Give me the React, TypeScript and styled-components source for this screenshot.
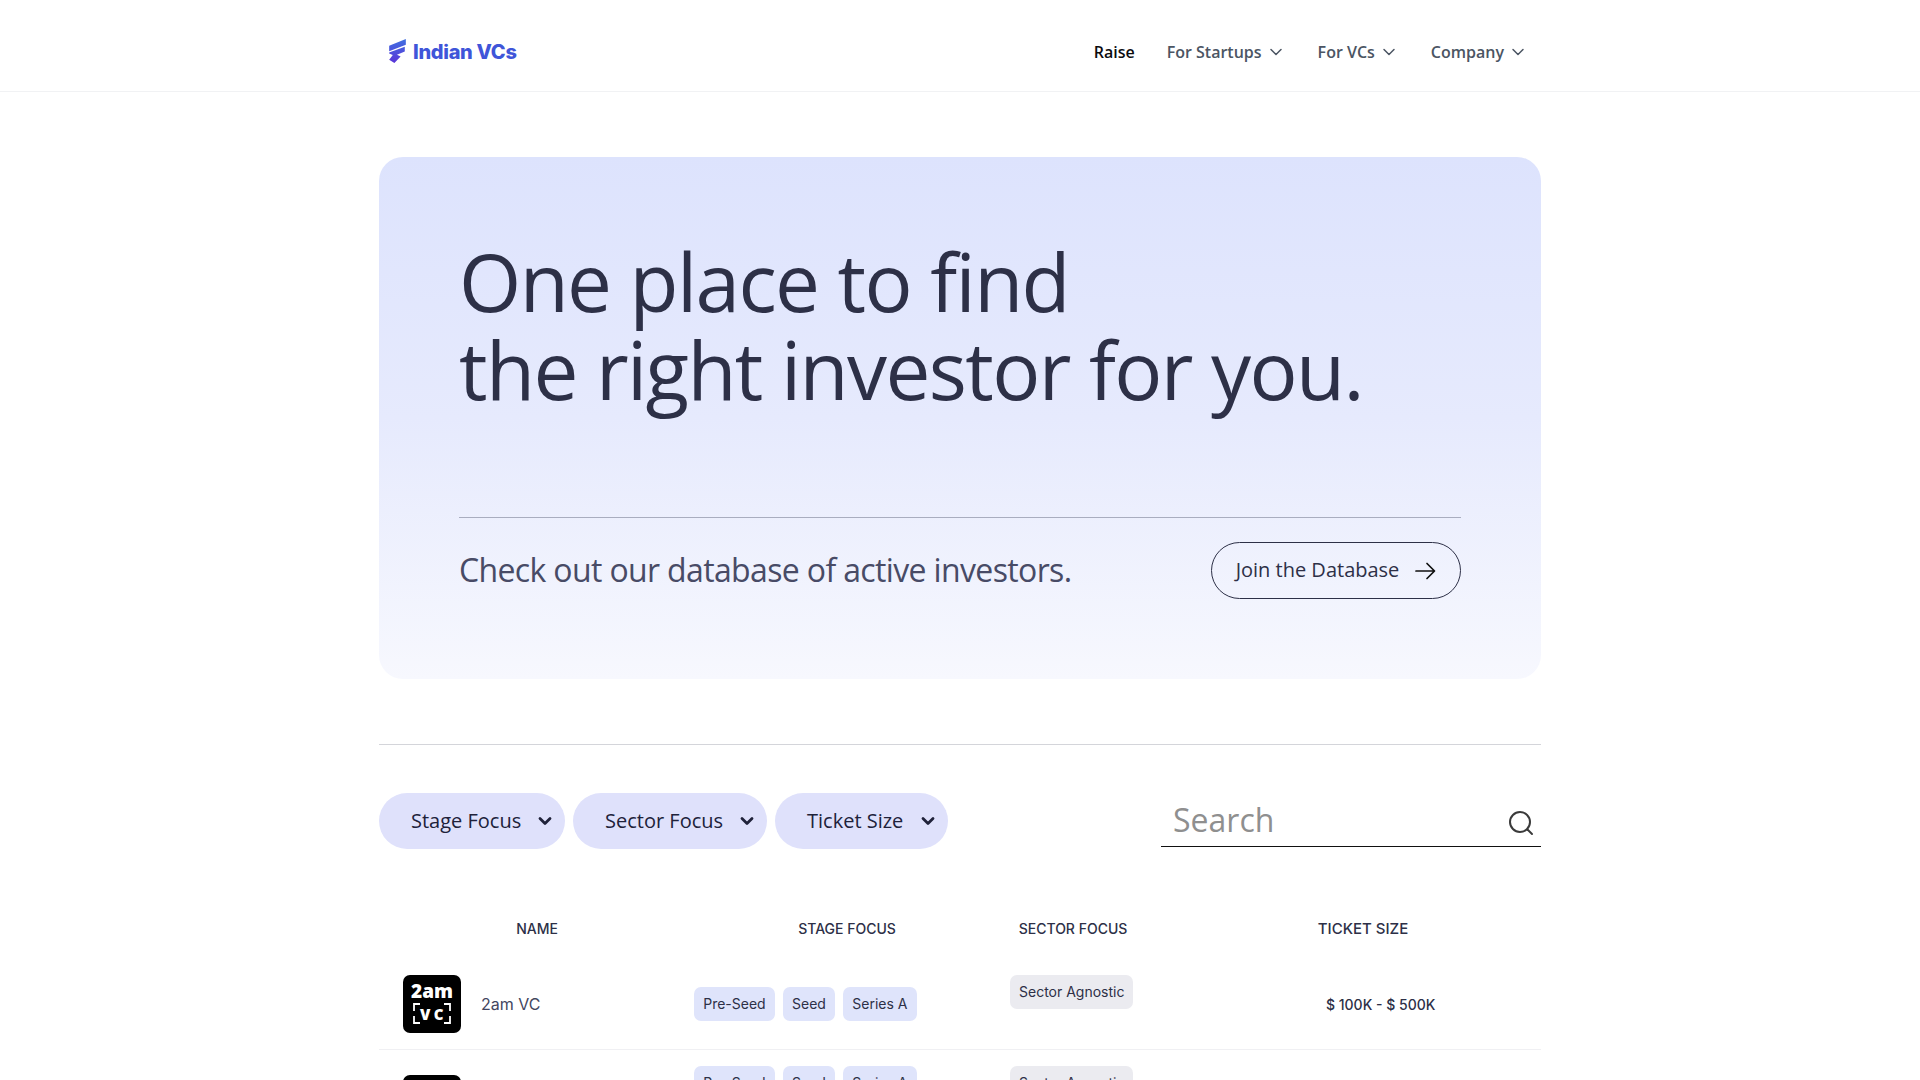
import React from "react";
import styled, { createGlobalStyle } from "styled-components";

const Global = createGlobalStyle`
  html, body { margin: 0; padding: 0; background: #fff; overflow: hidden; }
  body { font-family: "Open Sans", "Liberation Sans", sans-serif; color: #2d3047; }
  * { box-sizing: border-box; }
`;

const Page = styled.div`
  height: 100vh;
  overflow: hidden;
`;

const Header = styled.header`
  height: 92px;
  border-bottom: 1px solid #f1f2f4;
`;

const HeaderInner = styled.div`
  width: 1162px;
  height: 100%;
  margin: 0 auto;
  padding: 12px 15px 0 9px;
  display: flex;
  align-items: center;
  justify-content: space-between;
`;

const Brand = styled.a`
  display: flex;
  align-items: center;
  gap: 6px;
  font-family: Inter, sans-serif;
  font-weight: 800;
  font-size: 20px;
  letter-spacing: -0.3px;
  color: #3f55d9;
`;

const Nav = styled.nav`
  display: flex;
  align-items: center;
`;

const NavItem = styled.a<{ $active?: boolean; $gap: number }>`
  display: flex;
  align-items: center;
  gap: 6px;
  margin-left: ${(p) => p.$gap}px;
  font-size: 16px;
  font-weight: 600;
  color: ${(p) => (p.$active ? "#0b0b0f" : "#4b5563")};
`;

const Main = styled.main`
  width: 1162px;
  margin: 0 auto;
`;

const Hero = styled.section`
  height: 522px;
  margin-top: 65px;
  padding: 80px 80px 0;
  border-radius: 24px;
  background: linear-gradient(180deg, #dde3fd 0%, #e6eafd 50%, #f7f8fe 100%);
`;

const Title = styled.h1`
  margin: 0;
  font-size: 80px;
  line-height: 88px;
  font-weight: 400;
  letter-spacing: -1.6px;
  color: #2d3047;
`;

const HeroFoot = styled.div`
  margin-top: 104px;
  padding-top: 24px;
  border-top: 1px solid #a9adbf;
  display: flex;
  align-items: center;
  justify-content: space-between;
`;

const HeroText = styled.p`
  margin: 0 0 2px;
  font-size: 32px;
  letter-spacing: -0.64px;
  color: #484b66;
`;

const JoinButton = styled.a`
  width: 250px;
  height: 57px;
  padding: 0 0 0 1px;
  display: flex;
  align-items: center;
  justify-content: center;
  gap: 14px;
  border: 1px solid #2d3047;
  border-radius: 29px;
  font-size: 20px;
  color: #2d3047;
`;

const JoinLabel = styled.span`
  margin-bottom: 2px;
`;

const Rule = styled.hr`
  margin: 65px 0 0;
  border: 0;
  border-top: 1px solid #d4d5da;
`;

const Filters = styled.div`
  margin-top: 48px;
  display: flex;
  align-items: flex-start;
  gap: 8px;
`;

const FilterPill = styled.button<{ $w: number }>`
  width: ${(p) => p.$w}px;
  height: 56px;
  padding: 0 12px 2px 32px;
  display: flex;
  align-items: center;
  justify-content: space-between;
  border: 0;
  border-radius: 28px;
  background: #dfe1fb;
  font-family: inherit;
  font-size: 20px;
  color: #20223a;
`;

const PillChevron = styled.span`
  display: flex;
  margin-top: 2px;
`;

const Search = styled.div`
  width: 380px;
  height: 54px;
  margin-left: auto;
  padding: 0 7px 0 12px;
  display: flex;
  align-items: center;
  justify-content: space-between;
  border-bottom: 1px solid #111;
`;

const SearchText = styled.span`
  font-size: 32px;
  color: #8f8f8f;
`;

const SearchIcon = styled.svg`
  margin-top: 6px;
`;

const TableHead = styled.div`
  margin-top: 70px;
  margin-bottom: 20px;
  display: grid;
  grid-template-columns: 316px 304px 148px 1fr;
  font-family: Inter, sans-serif;
  font-size: 14px;
  font-weight: 500;
  line-height: 20px;
  color: #2d3047;
`;

const HeadCell = styled.div<{ $shiftLeft?: number; $size?: number }>`
  text-align: center;
  padding-left: ${(p) => p.$shiftLeft ?? 0}px;
  font-size: ${(p) => p.$size ?? 14}px;
`;

const Row = styled.div`
  padding: 16px 0;
  display: grid;
  grid-template-columns: 315px 316px 316px 1fr;
  border-bottom: 1px solid #f0f0f3;
  font-family: Inter, sans-serif;
  font-size: 14px;
`;

const NameCell = styled.div`
  padding-left: 24px;
  display: flex;
  align-items: center;
  gap: 20px;
  font-size: 16px;
  color: #43465f;
`;

const Tile = styled.div`
  width: 58px;
  height: 58px;
  flex: none;
  display: flex;
  flex-direction: column;
  align-items: center;
  border-radius: 7px;
  background: #000;
  color: #fff;
  font-family: "Open Sans", sans-serif;
  font-weight: 800;
  position: relative;
`;

const TileTop = styled.span`
  margin-top: 5px;
  font-size: 19px;
  line-height: 22px;
`;

const TileVc = styled.span`
  margin-top: 3px;
  font-size: 15px;
  line-height: 18px;
  letter-spacing: 3.5px;
  padding-left: 3px;
`;

const Brackets = styled.svg`
  position: absolute;
  left: 0;
  top: 0;
`;

const StageCell = styled.div`
  padding-right: 70px;
  display: flex;
  flex-wrap: wrap;
  align-items: center;
  align-content: center;
  gap: 8px;
`;

const Tag = styled.span`
  height: 34px;
  padding: 0 9.2px 1px;
  display: inline-flex;
  align-items: center;
  border-radius: 7px;
  background: #dfe4fb;
  font-size: 14px;
  color: #2d3047;
`;

const SectorCell = styled.div`
  align-self: start;
`;

const SectorTag = styled(Tag)`
  padding: 0 9px 1px;
  background: #ebebf0;
`;

const TicketCell = styled.div`
  display: flex;
  align-items: center;
  font-weight: 500;
  font-size: 14px;
  color: #2d3047;
`;

const Chevron = ({ size = 16, w = 1.5 }: { size?: number; w?: number }) => (
  <svg width={size} height={size} viewBox="0 0 16 16" fill="none" stroke="currentColor" strokeWidth={w} strokeLinecap="round" strokeLinejoin="round">
    <path d="M3 5.5 8 10.5 13 5.5" />
  </svg>
);

const BrandMark = () => (
  <svg width="19" height="25" viewBox="0 0 18 24">
    <defs>
      <linearGradient id="bm" x1="0" y1="0" x2="0" y2="1">
        <stop offset="0" stopColor="#3f6fe0" />
        <stop offset="1" stopColor="#5a35d8" />
      </linearGradient>
    </defs>
    <path fill="url(#bm)" d="M1 6.5 17 0v5.6L1 11.8ZM1 13 16 7.4v4.6L8.5 15l3.5 1.8-6 6.2-5-3 3.5-4.6L1 14Z" />
  </svg>
);

const VcLogo = () => (
  <Tile>
    <TileTop>2am</TileTop>
    <TileVc>VC</TileVc>
    <Brackets width="58" height="58" viewBox="0 0 58 58" fill="none" stroke="#fff" strokeWidth="1.8">
      <path d="M11 36V29h6M47 36V29h-6M11 41v7h6M47 41v7h-6" />
    </Brackets>
  </Tile>
);

type Investor = { name: string; stages: string[]; sector: string; ticket: string };

const investors: Investor[] = [
  { name: "2am VC", stages: ["Pre-Seed", "Seed", "Series A"], sector: "Sector Agnostic", ticket: "$ 100K - $ 500K" },
  { name: "", stages: ["Pre-Seed", "Seed", "Series A", "Series B"], sector: "Sector Agnostic", ticket: "" },
];

export default function App() {
  return (
    <Page>
      <Global />
      <Header>
        <HeaderInner>
          <Brand><BrandMark />Indian VCs</Brand>
          <Nav>
            <NavItem $active $gap={0}>Raise</NavItem>
            <NavItem $gap={32}>For Startups <Chevron /></NavItem>
            <NavItem $gap={34}>For VCs <Chevron /></NavItem>
            <NavItem $gap={34}>Company <Chevron /></NavItem>
          </Nav>
        </HeaderInner>
      </Header>
      <Main>
        <Hero>
          <Title>One place to find<br />the right investor for you.</Title>
          <HeroFoot>
            <HeroText>Check out our database of active investors.</HeroText>
            <JoinButton>
              <JoinLabel>Join the Database</JoinLabel>
              <svg width="24" height="24" viewBox="0 0 24 24" fill="none" stroke="#111" strokeWidth="1.7" strokeLinecap="round" strokeLinejoin="round">
                <path d="M3 12h18M14 4.5 21.5 12 14 19.5" />
              </svg>
            </JoinButton>
          </HeroFoot>
        </Hero>
        <Rule />
        <Filters>
          <FilterPill $w={186}>Stage Focus <PillChevron><Chevron w={2.8} /></PillChevron></FilterPill>
          <FilterPill $w={194}>Sector Focus <PillChevron><Chevron w={2.8} /></PillChevron></FilterPill>
          <FilterPill $w={173}>Ticket Size <PillChevron><Chevron w={2.8} /></PillChevron></FilterPill>
          <Search>
            <SearchText>Search</SearchText>
            <SearchIcon width="26" height="26" viewBox="0 0 26 26" fill="none" stroke="#3a3a3a" strokeWidth="2" strokeLinecap="round">
              <circle cx="12" cy="12" r="10" />
              <path d="M19.5 19.5 24 24" />
            </SearchIcon>
          </Search>
        </Filters>
        <TableHead>
          <HeadCell>NAME</HeadCell>
          <HeadCell>STAGE FOCUS</HeadCell>
          <HeadCell>SECTOR FOCUS</HeadCell>
          <HeadCell $shiftLeft={38} $size={15}>TICKET SIZE</HeadCell>
        </TableHead>
        {investors.map((inv, i) => (
          <Row key={i}>
            <NameCell><VcLogo />{inv.name}</NameCell>
            <StageCell>
              {inv.stages.map((s) => <Tag key={s}>{s}</Tag>)}
            </StageCell>
            <SectorCell><SectorTag>{inv.sector}</SectorTag></SectorCell>
            <TicketCell>{inv.ticket}</TicketCell>
          </Row>
        ))}
      </Main>
    </Page>
  );
}
